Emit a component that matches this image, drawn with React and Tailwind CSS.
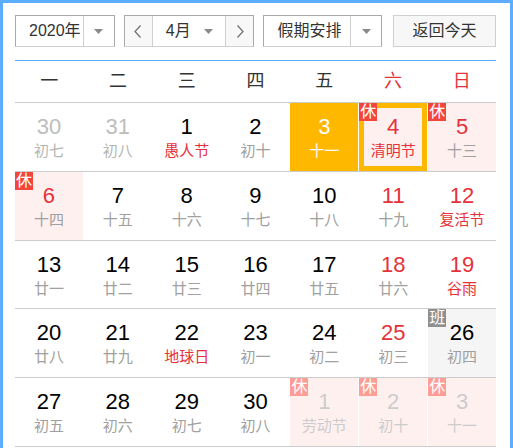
import React from "react";

const FONT = { fontFamily: '"Liberation Sans", "Noto Sans CJK SC", sans-serif' };

const weeks = ["一", "二", "三", "四", "五", "六", "日"];

// t: p = prev month, n = next month; red number, fr = red lunar/festival
const rows = [
  [
    { n: 30, l: "初七", t: "p" },
    { n: 31, l: "初八", t: "p" },
    { n: 1, l: "愚人节", fr: true },
    { n: 2, l: "初十" },
    { n: 3, l: "十一", today: true },
    { n: 4, l: "清明节", red: true, fr: true, rest: true, sel: true },
    { n: 5, l: "十三", red: true, rest: true },
  ],
  [
    { n: 6, l: "十四", red: true, rest: true },
    { n: 7, l: "十五" },
    { n: 8, l: "十六" },
    { n: 9, l: "十七" },
    { n: 10, l: "十八" },
    { n: 11, l: "十九", red: true },
    { n: 12, l: "复活节", red: true, fr: true },
  ],
  [
    { n: 13, l: "廿一" },
    { n: 14, l: "廿二" },
    { n: 15, l: "廿三" },
    { n: 16, l: "廿四" },
    { n: 17, l: "廿五" },
    { n: 18, l: "廿六", red: true },
    { n: 19, l: "谷雨", red: true, fr: true },
  ],
  [
    { n: 20, l: "廿八" },
    { n: 21, l: "廿九" },
    { n: 22, l: "地球日", fr: true },
    { n: 23, l: "初一" },
    { n: 24, l: "初二" },
    { n: 25, l: "初三", red: true },
    { n: 26, l: "初四", work: true },
  ],
  [
    { n: 27, l: "初五" },
    { n: 28, l: "初六" },
    { n: 29, l: "初七" },
    { n: 30, l: "初八" },
    { n: 1, l: "劳动节", t: "n", rest: true },
    { n: 2, l: "初十", t: "n", rest: true },
    { n: 3, l: "十一", t: "n", rest: true },
  ],
];

function Caret() {
  return (
    <svg width="9" height="5" viewBox="0 0 9 5">
      <path d="M0 0h9L4.5 5z" fill="#8a8a8a" />
    </svg>
  );
}

function Chevron({ dir }) {
  return (
    <svg width="8" height="13" viewBox="0 0 8 13">
      <path
        d={dir === "l" ? "M6.5 0.5L1 6.5l5.5 6" : "M1.5 0.5L7 6.5l-5.5 6"}
        fill="none"
        stroke="#707070"
        strokeWidth="1.2"
      />
    </svg>
  );
}

function Cell({ d }) {
  let bg = "bg-white";
  if (d.today) bg = "bg-[#ffb800]";
  else if (d.rest) bg = "bg-[#fff0f0]";
  else if (d.work) bg = "bg-[#f5f5f5]";

  let num = "text-black";
  let lunar = "text-[#a0a0a0]";
  if (d.today) {
    num = "text-white";
    lunar = "text-white";
  } else if (d.t === "p") {
    num = "text-[#bdbdbd]";
    lunar = "text-[#b5b5b5]";
  } else if (d.t === "n") {
    num = "text-[#cccccc]";
    lunar = "text-[#cccccc]";
  } else {
    if (d.red) num = "text-[#e5323a]";
    if (d.fr) lunar = "text-[#e5323a]";
  }

  let badge = null;
  if (d.rest)
    badge = d.t === "n" ? (
      <span className="absolute left-0 top-0 flex h-[18px] w-[18px] items-center justify-center bg-[#fd9d95] text-[16px] leading-none text-white">
        休
      </span>
    ) : (
      <span className="absolute left-0 top-0 flex h-[18px] w-[18px] items-center justify-center bg-[#f2463b] text-[16px] leading-none text-white">
        休
      </span>
    );
  if (d.work)
    badge = (
      <span className="absolute left-0 top-0 flex h-[18px] w-[18px] items-center justify-center bg-[#8f8f8f] text-[16px] leading-none text-white">
        班
      </span>
    );

  return (
    <div className={`relative flex h-[67.8px] flex-col items-center pt-[12px] ${bg}`}>
      {d.sel && <div className="pointer-events-none absolute inset-0 border-[5px] border-[#ffb800]" />}
      {badge}
      <span className={`text-[22px] leading-[24px] ${num}`}>{d.n}</span>
      <span className={`mt-[2px] text-[15px] leading-[20px] ${lunar}`}>{d.l}</span>
    </div>
  );
}

export default function App() {
  return (
    <div style={FONT} className="min-h-screen w-[513px] border-[3px] border-b-0 border-[#5cadff] bg-white pl-[12px] pr-[14px] pt-[12px]">
      <div className="flex h-[32px] text-[16px] text-[#333]">
        <div className="flex w-[100px] border border-[#a9a9a9] border-b-[#d0d0d0]">
          <div className="flex flex-1 items-center pl-[13px]">2020年</div>
          <div className="flex w-[31px] items-center justify-center border-l border-[#d0d0d0]">
            <Caret />
          </div>
        </div>
        <div className="ml-[9px] flex w-[131px] border border-[#a9a9a9] border-b-[#d0d0d0]">
          <div className="flex w-[28px] items-center justify-center border-r border-[#d0d0d0] bg-[#f8f8f8]">
            <Chevron dir="l" />
          </div>
          <div className="flex flex-1 items-center justify-between pl-[13px] pr-[12px]">
            <span>4月</span>
            <Caret />
          </div>
          <div className="flex w-[28px] items-center justify-center border-l border-[#d0d0d0] bg-[#f8f8f8]">
            <Chevron dir="r" />
          </div>
        </div>
        <div className="ml-[9px] flex w-[119px] border border-[#a9a9a9] border-b-[#d0d0d0]">
          <div className="flex flex-1 items-center pl-[13px]">假期安排</div>
          <div className="flex w-[31px] items-center justify-center border-l border-[#d0d0d0]">
            <Caret />
          </div>
        </div>
        <button
          type="button"
          className="ml-[11px] flex w-[103px] items-center justify-center border border-[#d0d0d0] bg-[#f7f7f7] text-[#333]"
        >
          返回今天
        </button>
      </div>

      <div className="mt-[13px] h-px bg-[#5cadff]" />

      <div className="grid h-[41px] grid-cols-7 text-[18px]">
        {weeks.map((w, i) => (
          <div
            key={w}
            className={`flex items-center justify-center ${i >= 5 ? "text-[#e5323a]" : "text-[#333]"}`}
          >
            {w}
          </div>
        ))}
      </div>

      {rows.map((r, i) => (
        <div key={i} className="grid grid-cols-7 gap-x-px border-t border-[#cccccc]">
          {r.map((d, j) => (
            <Cell key={j} d={d} />
          ))}
        </div>
      ))}
      <div className="border-t border-[#cccccc]" />
    </div>
  );
}
